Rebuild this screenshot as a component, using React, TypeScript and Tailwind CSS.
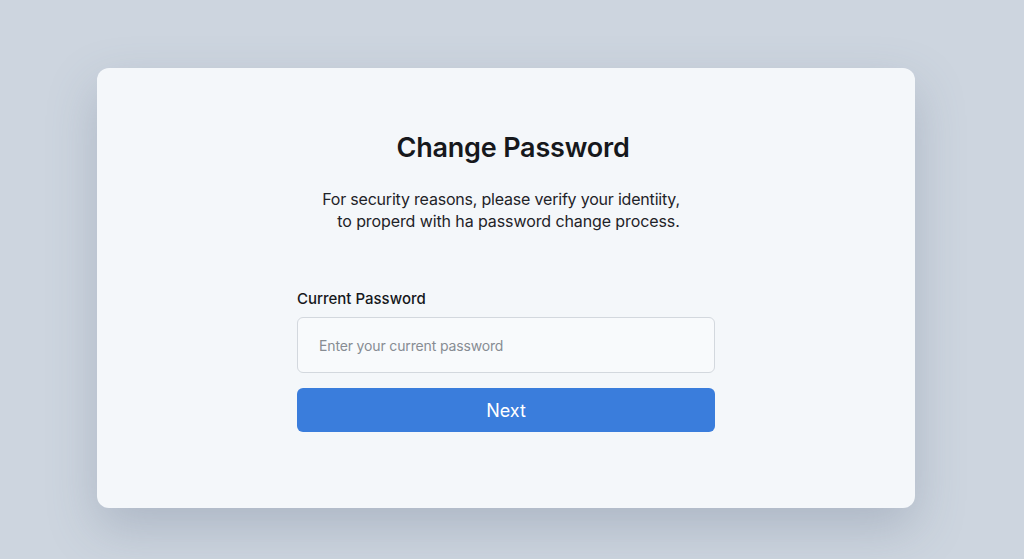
import React from "react";

export default function App() {
  return (
    <div
      className="w-[1024px] h-[559px] bg-[#cdd5df] overflow-hidden pt-[68px]"
      style={{ fontFamily: "Inter, 'Noto Sans', sans-serif" }}
    >
      <div className="ml-[97px] w-[818px] h-[440px] rounded-[12px] bg-[#f4f7fa] shadow-[0_20px_50px_rgba(90,105,130,0.28)] flex flex-col items-center pt-[63px]">
        <h1 className="ml-[14px] text-[27px] leading-[34px] font-semibold text-[#16181c] tracking-[-0.2px]">
          Change Password
        </h1>
        <p className="mt-[23px] text-[16px] leading-[22px] text-[#1f2328] text-center tracking-[-0.2px]">
          <span className="pr-[10px]">For security reasons, please verify your identiity,</span>
          <br />
          <span className="pl-[5px] tracking-[-0.1px]">to properd with ha password change process.</span>
        </p>
        <div className="mt-[57px] w-[418px] flex flex-col">
          <label className="text-[15px] leading-[20px] font-medium text-[#16181c]">
            Current Password
          </label>
          <input
            type="password"
            placeholder="Enter your current password"
            className="mt-[8px] h-[56px] w-full rounded-[6px] border border-[#d3d8de] bg-[#f8fafc] px-[21px] text-[14px] tracking-[-0.15px] text-[#333] placeholder:text-[#878c93] outline-none"
          />
          <button className="mt-[15px] h-[44px] w-full rounded-[6px] bg-[#3a7ddc] text-white text-[18px] font-normal">
            Next
          </button>
        </div>
      </div>
    </div>
  );
}
